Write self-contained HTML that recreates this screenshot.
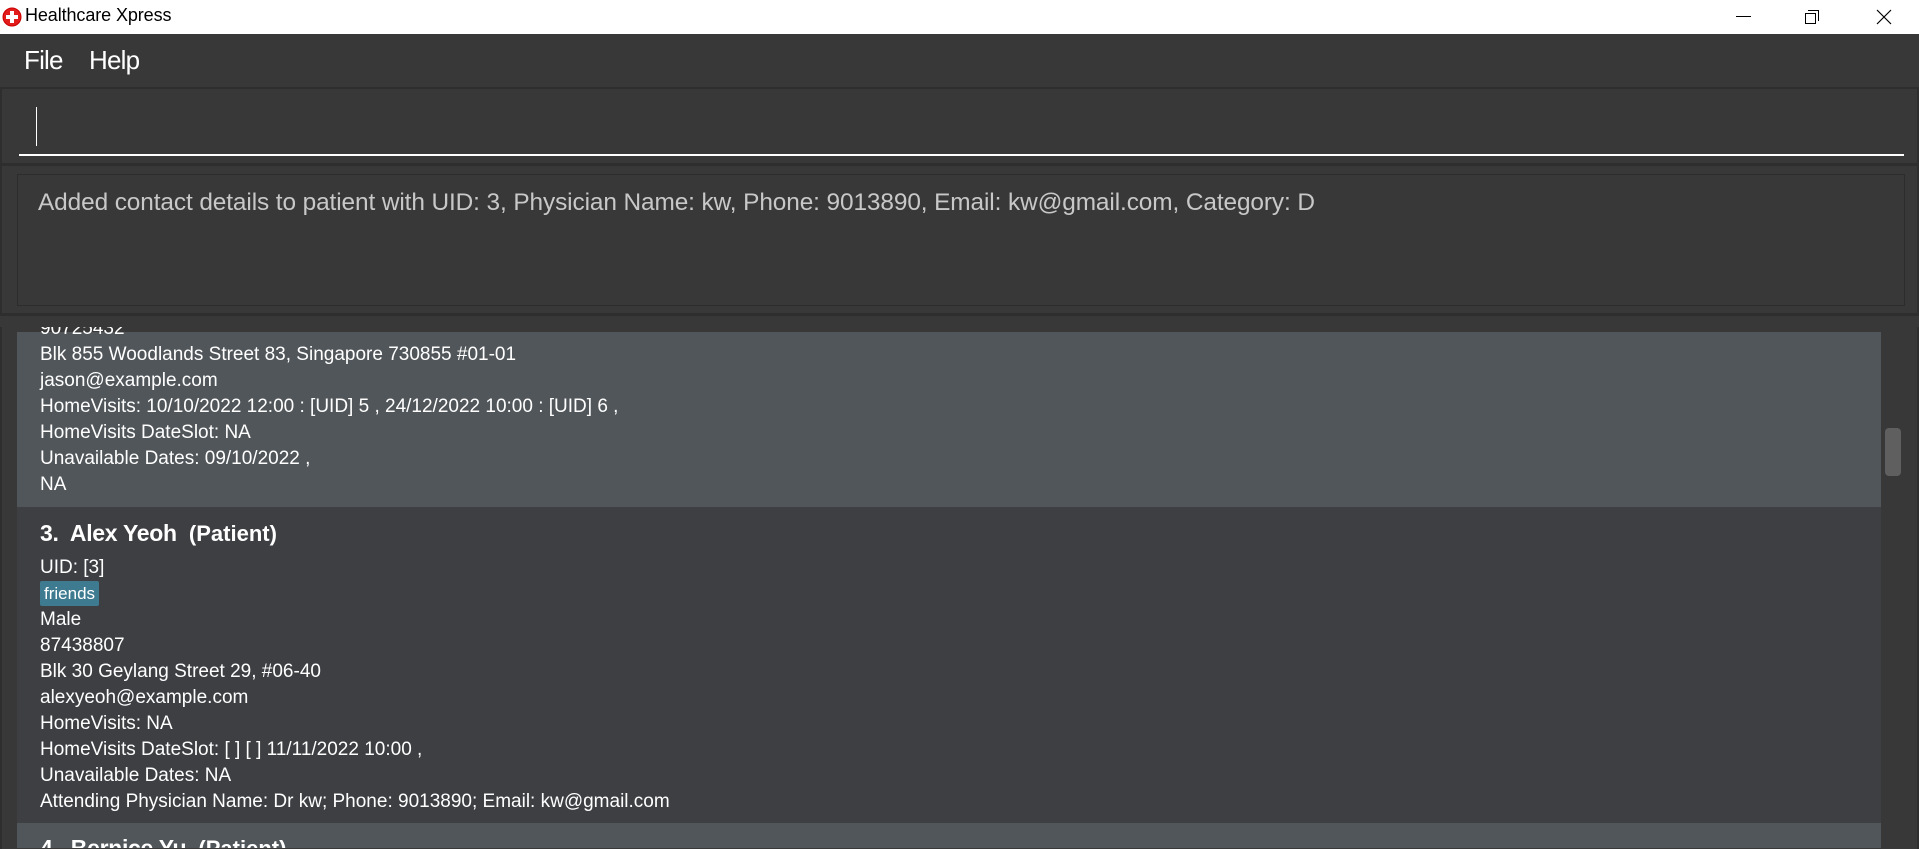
<!DOCTYPE html>
<html><head><meta charset="utf-8"><style>
*{margin:0;padding:0;box-sizing:border-box}
body{width:1919px;height:848px;overflow:hidden;background:#383838;font-family:"Segoe UI","Liberation Sans",sans-serif;position:relative}
.a{position:absolute}
.tb{left:0;top:0;width:1919px;height:34px;background:#fff}
.line{color:#fff;font-size:19px;line-height:26px;white-space:nowrap;letter-spacing:0px}
.card{left:17px;width:1864px}
</style></head><body>
<div class="a tb">
 <svg class="a" style="left:2px;top:7px" width="20" height="20" viewBox="0 0 20 20"><circle cx="10" cy="10" r="9" fill="#e21b1b" stroke="#c00" stroke-width="1"/><rect x="8" y="4" width="4" height="12" fill="#fff"/><rect x="4" y="8" width="12" height="4" fill="#fff"/></svg>
 <div class="a" style="left:25px;top:5px;font-size:18px;color:#000;letter-spacing:-0.1px">Healthcare Xpress</div>
 <div class="a" style="left:1736px;top:16px;width:15px;height:1px;background:#000"></div>
 <div class="a" style="left:1805px;top:13px;width:11px;height:11px;border:1px solid #000;background:#fff"></div>
 <div class="a" style="left:1808px;top:10px;width:11px;height:11px;border-top:1px solid #000;border-right:1px solid #000"></div>
 <svg class="a" style="left:1876px;top:9px" width="16" height="16"><path d="M1 1L15 15M15 1L1 15" stroke="#000" stroke-width="1.2"/></svg>
</div>
<div class="a" style="left:24px;top:45px;font-size:26px;color:#fff;letter-spacing:-0.8px">File</div>
<div class="a" style="left:89px;top:45px;font-size:26px;color:#fff;letter-spacing:-0.8px">Help</div>
<div class="a" style="left:0;top:87px;width:1919px;height:2px;background:#2e2e2e"></div>
<div class="a" style="left:0;top:89px;width:2px;height:760px;background:#2e2e2e"></div>
<div class="a" style="left:1917px;top:89px;width:2px;height:760px;background:#2e2e2e"></div>
<div class="a" style="left:36px;top:107px;width:1px;height:39px;background:#fff"></div>
<div class="a" style="left:19px;top:154px;width:1885px;height:2px;background:#fff"></div>
<div class="a" style="left:0;top:163px;width:1919px;height:3px;background:#2e2e2e"></div>
<div class="a" style="left:17px;top:174px;width:1888px;height:132px;border:1px solid #2c2c2c"></div>
<div class="a" style="left:38px;top:189px;font-size:24.4px;color:#c8c8c8;white-space:nowrap;letter-spacing:-0.1px">Added contact details to patient with UID: 3, Physician Name: kw, Phone: 9013890, Email: kw@gmail.com, Category: D</div>
<div class="a" style="left:0;top:313px;width:1919px;height:3px;background:#2e2e2e"></div>
<div class="a" style="left:0;top:316px;width:1919px;height:532px;overflow:hidden">
 <div class="a card" style="top:16px;height:175px;background:#51565a"></div>
 <div class="a card" style="top:191px;height:316px;background:#3d3f43"></div>
 <div class="a card" style="top:507px;height:40px;background:#51565a"></div>
 <div class="a" style="left:40px;top:0px">
  <div class="line">90725432</div>
  <div class="line">Blk 855 Woodlands Street 83, Singapore 730855 #01-01</div>
  <div class="line">jason@example.com</div>
  <div class="line">HomeVisits: 10/10/2022 12:00 : [UID] 5 , 24/12/2022 10:00 : [UID] 6 ,</div>
  <div class="line">HomeVisits DateSlot: NA</div>
  <div class="line">Unavailable Dates: 09/10/2022 ,</div>
  <div class="line">NA</div>
 </div>
 <div class="a" style="left:0;top:0;width:1919px;height:11px;background:#383838"></div>
 <div class="a" style="left:40px;top:204px;color:#fff;font-size:23px;font-weight:bold;white-space:nowrap;letter-spacing:-0.3px">3.&nbsp; Alex Yeoh&nbsp; <span style="font-size:22px;letter-spacing:0">(Patient)</span></div>
 <div class="a" style="left:40px;top:239px">
  <div class="line">UID: [3]</div>
  <div style="height:26px"><span style="display:inline-block;background:#3e7b91;color:#fff;font-size:17px;line-height:25px;padding:0 4px;border-radius:2px">friends</span></div>
  <div class="line">Male</div>
  <div class="line">87438807</div>
  <div class="line">Blk 30 Geylang Street 29, #06-40</div>
  <div class="line">alexyeoh@example.com</div>
  <div class="line">HomeVisits: NA</div>
  <div class="line">HomeVisits DateSlot: [ ] [ ] 11/11/2022 10:00 ,</div>
  <div class="line">Unavailable Dates: NA</div>
  <div class="line">Attending Physician Name: Dr kw; Phone: 9013890; Email: kw@gmail.com</div>
 </div>
 <div class="a" style="left:40px;top:519px;color:#fff;font-size:23px;font-weight:bold;white-space:nowrap;letter-spacing:-0.3px">4.&nbsp; Bernice Yu&nbsp; <span style="font-size:22px;letter-spacing:0">(Patient)</span></div>
 <div class="a" style="left:1885px;top:112px;width:16px;height:48px;background:#5f5f5f;border-radius:4px"></div>
</div>
</body></html>
